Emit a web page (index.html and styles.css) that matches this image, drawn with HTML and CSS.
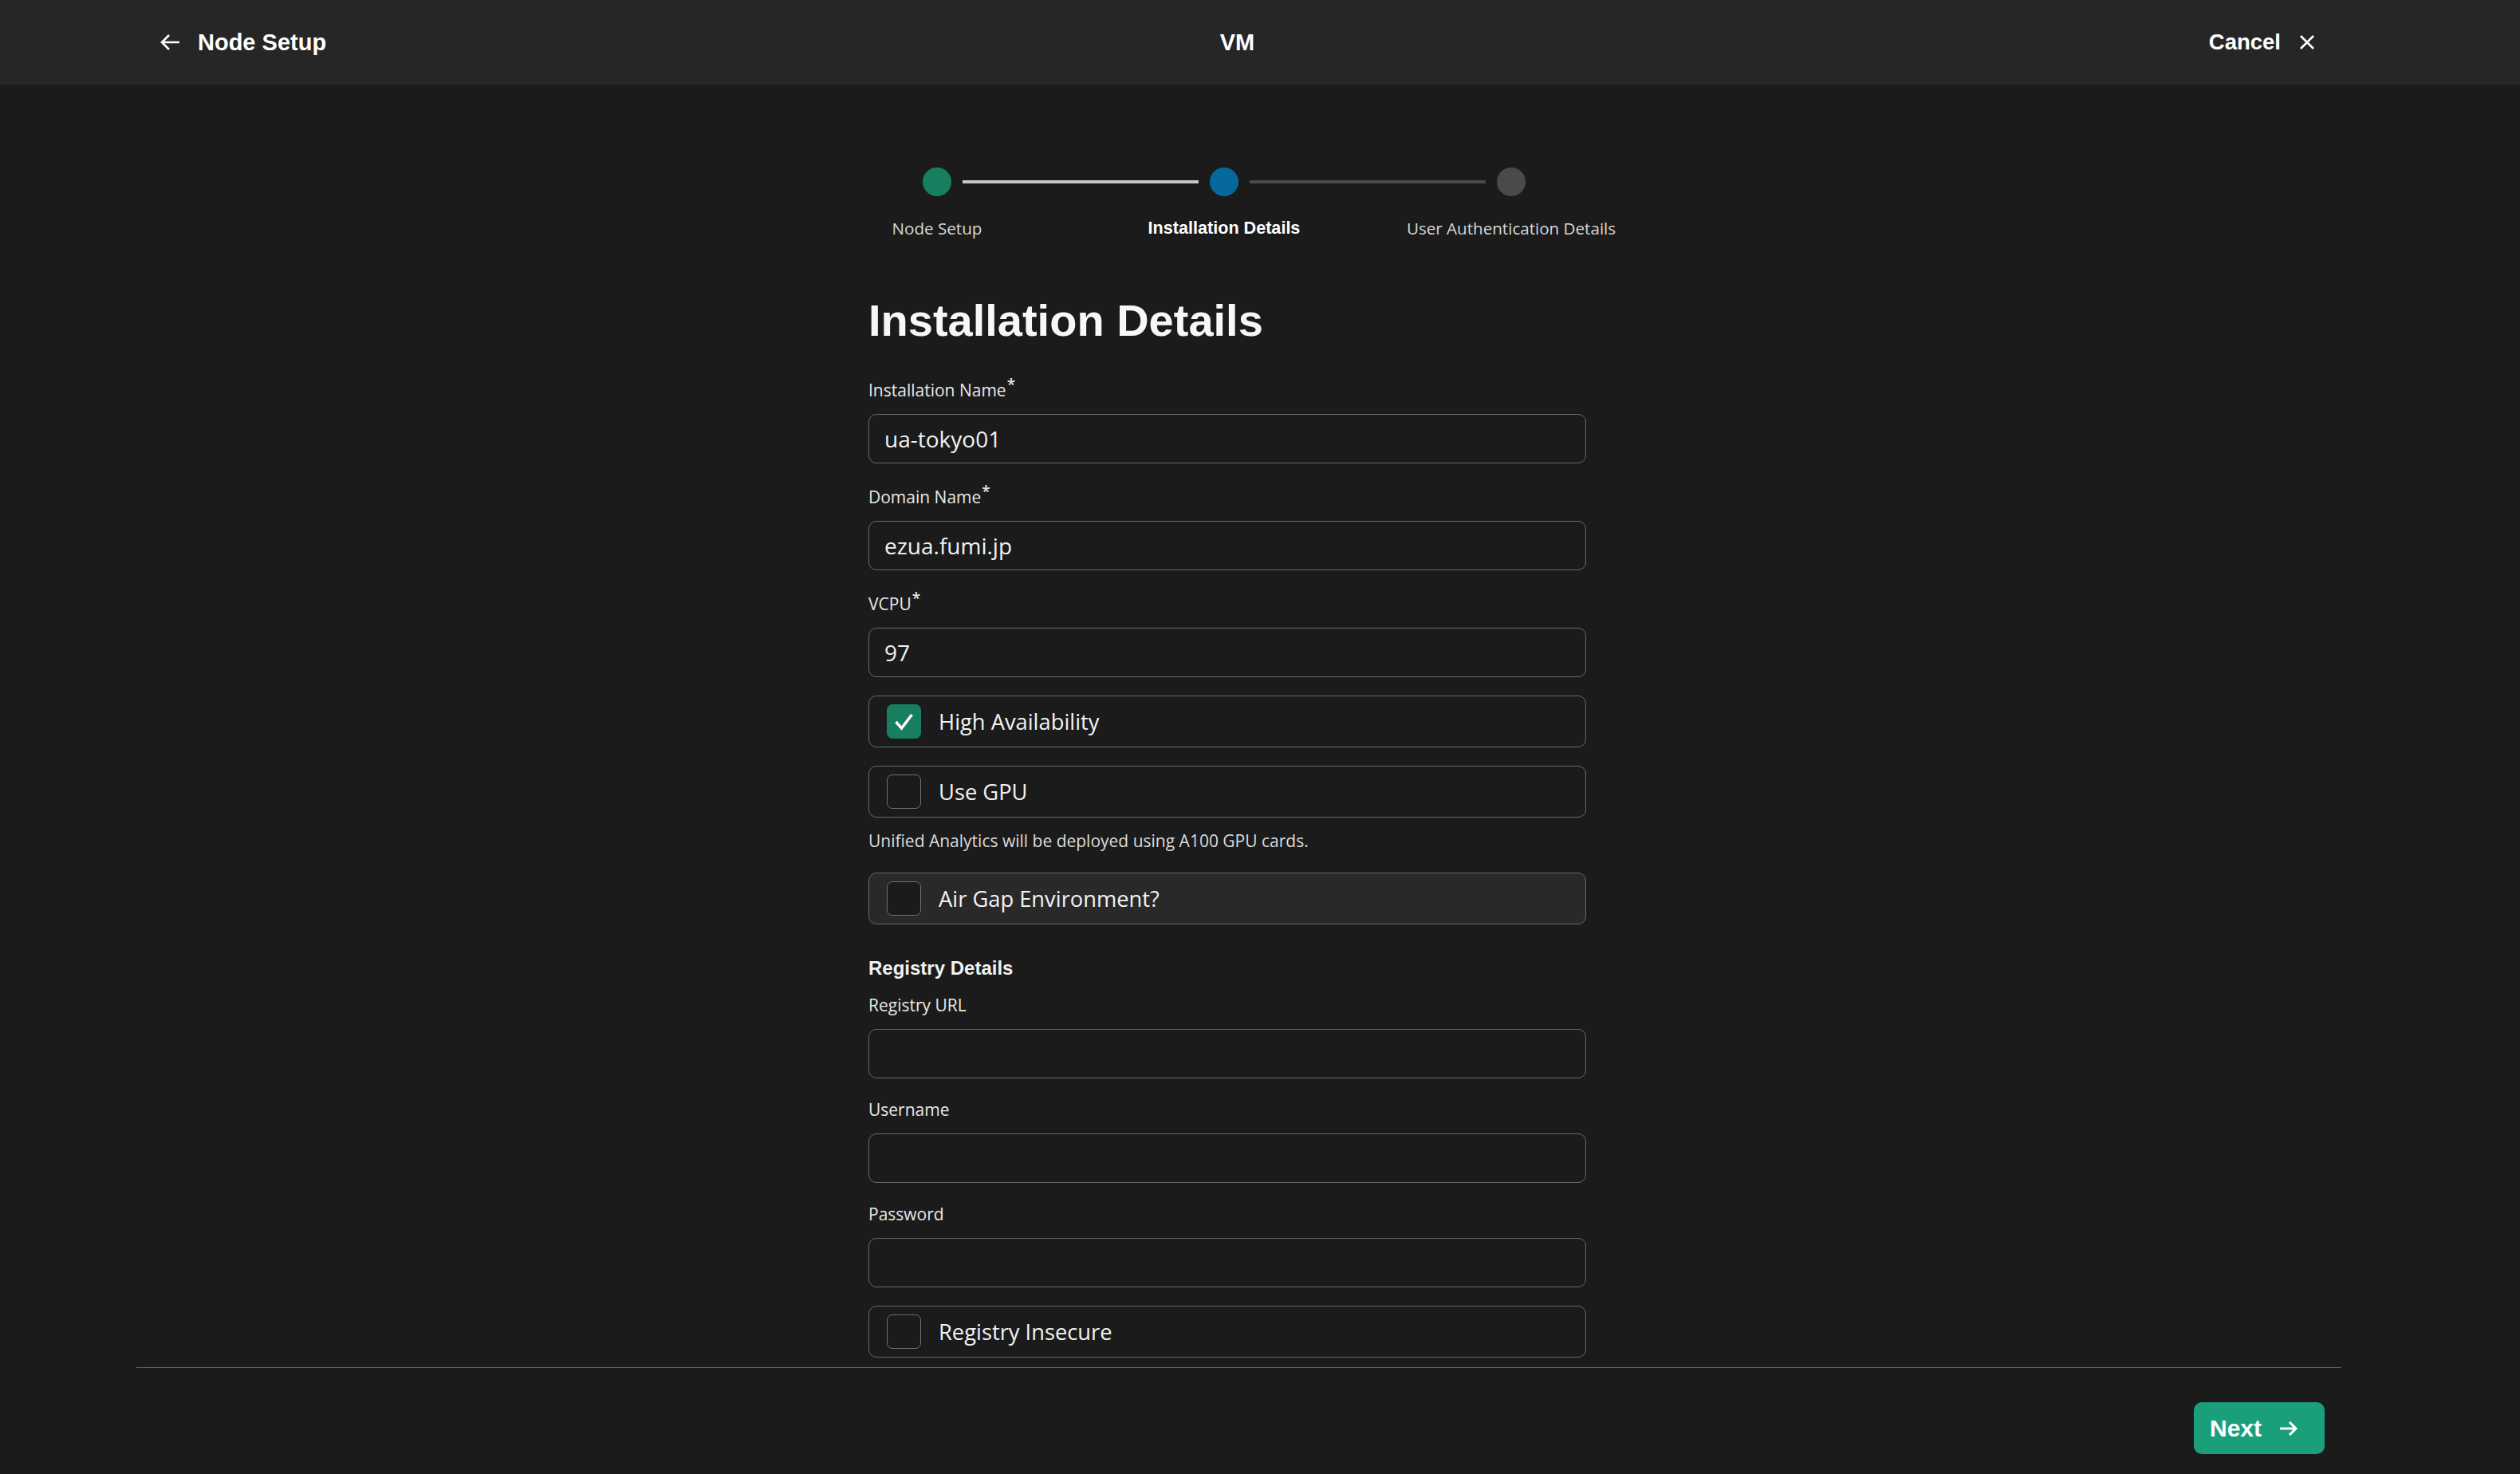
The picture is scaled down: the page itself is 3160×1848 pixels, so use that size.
FILE: index.html
```html
<!DOCTYPE html>
<html lang="en">
<head>
<meta charset="utf-8">
<title>Node Setup – VM</title>
<link rel="stylesheet" href="styles.css">
</head>
<body>
<header class="topbar">
  <div class="topbar-left">
    <svg class="icon-back" width="26" height="22" viewBox="0 0 26 22" aria-hidden="true"><path d="M25 11H3M12 2L3 11l9 9" fill="none" stroke="#fff" stroke-width="2.6"/></svg>
    <span class="topbar-title">Node Setup</span>
  </div>
  <div class="topbar-center">VM</div>
  <div class="topbar-right">
    <span class="topbar-cancel">Cancel</span>
    <svg class="icon-close" width="20" height="20" viewBox="0 0 20 20" aria-hidden="true"><path d="M2 2l16 16M18 2L2 18" fill="none" stroke="#fff" stroke-width="2.6"/></svg>
  </div>
</header>

<main class="content">
  <div class="form-col">
    <ol class="stepper">
      <li class="step step-done"><span class="dot"></span><span class="step-label">Node Setup</span></li>
      <li class="step step-active"><span class="dot"></span><span class="step-label">Installation Details</span></li>
      <li class="step step-todo"><span class="dot"></span><span class="step-label">User Authentication Details</span></li>
    </ol>

    <h1 class="page-title">Installation Details</h1>

    <div class="fields">
      <div class="field">
        <label class="field-label">Installation Name<sup>*</sup></label>
        <div class="input">ua-tokyo01</div>
      </div>
      <div class="field">
        <label class="field-label">Domain Name<sup>*</sup></label>
        <div class="input">ezua.fumi.jp</div>
      </div>
      <div class="field">
        <label class="field-label">VCPU<sup>*</sup></label>
        <div class="input">97</div>
      </div>
    </div>

    <div class="check-row">
      <span class="box box-checked"><svg width="43" height="43" viewBox="0 0 43 43" aria-hidden="true"><path d="M11.5 22l7 8 13-17" fill="none" stroke="#fff" stroke-width="3.5"/></svg></span>
      <span class="check-text">High Availability</span>
    </div>
    <div class="check-row">
      <span class="box"></span>
      <span class="check-text">Use GPU</span>
    </div>
    <p class="helper">Unified Analytics will be deployed using A100 GPU cards.</p>
    <div class="check-row check-row-filled">
      <span class="box"></span>
      <span class="check-text">Air Gap Environment?</span>
    </div>

    <h2 class="section-title">Registry Details</h2>
    <div class="fields fields-compact">
      <div class="field">
        <label class="field-label">Registry URL</label>
        <div class="input"></div>
      </div>
      <div class="field">
        <label class="field-label">Username</label>
        <div class="input"></div>
      </div>
      <div class="field">
        <label class="field-label">Password</label>
        <div class="input"></div>
      </div>
    </div>
    <div class="check-row">
      <span class="box"></span>
      <span class="check-text">Registry Insecure</span>
    </div>
  </div>
</main>

<footer class="footer">
  <button class="btn-next" type="button">
    <span>Next</span>
    <svg width="24" height="20" viewBox="0 0 24 20" aria-hidden="true"><path d="M1 10h20M13 2l8 8-8 8" fill="none" stroke="#fff" stroke-width="3"/></svg>
  </button>
</footer>
</body>
</html>
```

FILE: styles.css
```css
* { box-sizing: border-box; }

html, body {
  margin: 0;
  padding: 0;
  background: #1b1b1b;
  color: #f2f2f2;
  font-family: "Open Sans", "Liberation Sans", sans-serif;
  height: 1848px;
  overflow: hidden;
}

/* ---------- top bar ---------- */
.topbar {
  height: 106px;
  background: #262626;
  display: grid;
  grid-template-columns: 1fr auto 1fr;
  align-items: center;
  padding: 0 257px 0 200px;
  font-family: "Liberation Sans", Arial, sans-serif;
  font-weight: 700;
  font-size: 29px;
  color: #fff;
}
.topbar-left {
  display: flex;
  align-items: center;
  gap: 22px;
}
.topbar-center { text-align: center; }
.topbar-right {
  display: flex;
  align-items: center;
  justify-content: flex-end;
  gap: 23px;
}
.topbar-cancel { font-size: 27.5px; }
.icon-back, .icon-close { display: block; }

/* ---------- main ---------- */
.content {
  height: 1608px;
  overflow: hidden;
  display: flex;
  justify-content: center;
  padding-right: 82px;
}
.form-col {
  width: 900px;
  flex: none;
}

/* stepper */
.stepper {
  list-style: none;
  margin: 104px 0 0 -94px;
  padding: 0;
  width: 1080px;
  display: grid;
  grid-template-columns: repeat(3, 360px);
}
.step {
  position: relative;
  display: flex;
  flex-direction: column;
  align-items: center;
}
.dot {
  width: 36px;
  height: 36px;
  border-radius: 50%;
  background: #4a4a4a;
}
.step-done .dot { background: #177f5f; }
.step-active .dot { background: #05689b; }
.step-done::after,
.step-active::after {
  content: "";
  position: absolute;
  top: 16px;
  left: calc(50% + 32px);
  width: 296px;
  height: 4px;
  background: #4a4a4a;
}
.step-done::after { background: #c8c8c8; }
.step-label {
  margin-top: 28px;
  font-size: 20.6px;
  line-height: 24px;
  color: #d8d8d8;
  white-space: nowrap;
}
.step-active .step-label {
  font-family: "Liberation Sans", Arial, sans-serif;
  font-weight: 700;
  font-size: 21.6px;
  color: #fff;
}

/* titles */
.page-title {
  margin: 72px 0 43px;
  font-family: "Liberation Sans", Arial, sans-serif;
  font-weight: 700;
  font-size: 56px;
  line-height: 64px;
  color: #f7f7f7;
}
.section-title {
  margin: 41px 0 20px;
  font-family: "Liberation Sans", Arial, sans-serif;
  font-weight: 700;
  font-size: 24px;
  line-height: 28px;
  color: #f2f2f2;
}

/* fields */
.field + .field { margin-top: 30px; }
.fields-compact .field + .field { margin-top: 27px; }
.field-label {
  display: block;
  margin-bottom: 18px;
  font-size: 21px;
  font-weight: 500;
  line-height: 24px;
  color: #e8e8e8;
}
.field-label sup {
  font-size: 19px;
  font-weight: 600;
  line-height: 0;
  vertical-align: baseline;
  position: relative;
  top: -8px;
  margin-left: 1px;
}
.input {
  height: 62px;
  border: 1px solid #6a6a6a;
  border-radius: 10px;
  padding: 0 19px;
  display: flex;
  align-items: center;
  font-size: 28px;
  color: #f2f2f2;
}

/* checkbox rows */
.check-row {
  margin-top: 23px;
  height: 65px;
  border: 1px solid #6a6a6a;
  border-radius: 10px;
  padding-left: 22px;
  display: flex;
  align-items: center;
  gap: 22px;
}
.check-row-filled { background: #292929; margin-top: 28px; }
.box {
  width: 43px;
  height: 43px;
  flex: none;
  border: 1.5px solid #707070;
  border-radius: 7px;
  background: #1b1b1b;
}
.box-checked {
  background: #177f5f;
  border-color: #177f5f;
  position: relative;
}
.box-checked svg {
  position: absolute;
  top: -1.5px;
  left: -1.5px;
}
.check-text {
  font-size: 27.3px;
  color: #f2f2f2;
}
.helper {
  margin: 17px 0 0;
  font-size: 21px;
  line-height: 24px;
  color: #dcdcdc;
}

/* ---------- footer ---------- */
.footer {
  margin: 0 224px 0 171px;
  border-top: 1px solid #5e5e5e;
  height: 134px;
  padding: 43px 21px 0 0;
  display: flex;
  justify-content: flex-end;
  align-items: flex-start;
}
.btn-next {
  width: 164px;
  height: 65px;
  border: none;
  border-radius: 10px;
  background: #1a9f7a;
  color: #fff;
  padding: 0 0 0 20px;
  display: flex;
  align-items: center;
  gap: 22px;
  font-family: "Liberation Sans", Arial, sans-serif;
  font-weight: 700;
  font-size: 30px;
  cursor: pointer;
}
.btn-next svg { display: block; }
```
